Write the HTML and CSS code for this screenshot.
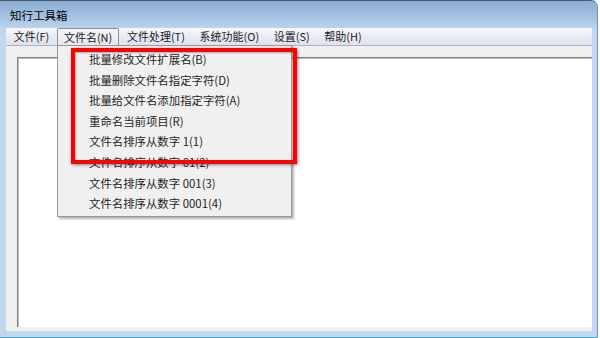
FILE: index.html
```html
<!doctype html>
<html>
<head>
<meta charset="utf-8">
<title>知行工具箱</title>
<link rel="stylesheet" href="styles.css">
</head>
<body>
	<div class="window">
		<div class="titlebar">知行工具箱</div>
		<div class="menubar">
			<span class="menu-item">文件(F)</span>
			<span class="menu-item active">文件名(N)</span>
			<span class="menu-item">文件处理(T)</span>
			<span class="menu-item">系统功能(O)</span>
			<span class="menu-item">设置(S)</span>
			<span class="menu-item">帮助(H)</span>
		</div>
		<div class="client">
			<div class="panel"></div>
		</div>
		<!-- 下拉菜单 -->
		<ul class="dropdown">
			<li>批量修改文件扩展名(B)</li>
			<li>批量删除文件名指定字符(D)</li>
			<li>批量给文件名添加指定字符(A)</li>
			<li>重命名当前项目(R)</li>
			<li>文件名排序从数字 1(1)</li>
			<li>文件名排序从数字 01(2)</li>
			<li>文件名排序从数字 001(3)</li>
			<li>文件名排序从数字 0001(4)</li>
		</ul>
		<div class="mark"></div>
	</div>
</body>
</html>
```
FILE: styles.css
```css
/* 窗口截图 */
html,body{
	margin:0;
	padding:0;
	background:#ffffff;
	font-family:"Noto Sans CJK SC","Liberation Sans",sans-serif;
}
.window{
	width:598px;
	height:338px;
	box-sizing:border-box;
	position:relative;
	display:flex;
	flex-direction:column;
	background:#c2d7ee;
	border-top:1px solid #4c5a6c;
	border-right:1px solid #6e93bb;
	border-bottom:1px solid #3fb2cc;
	border-radius:0 7px 0 0;
	overflow:hidden;
}
.titlebar{
	height:27px;
	padding-left:10px;
	display:flex;
	align-items:center;
	font-size:11.5px;
	color:#000;
	background:linear-gradient(#8badd3,#a9c6e6 70%,#bcd4ed);
}
.menubar{
	height:17px;
	margin:0 5px 0 6px;
	display:flex;
	align-items:center;
	padding-left:1px;
	background:linear-gradient(#f7f8fc,#e9ecf6 50%,#dde2f1);
	border-bottom:1px solid #aeb3c2;
	font-size:11px;
	color:#1a1a1a;
}
.menu-item{
	height:17px;
	line-height:17px;
	padding:0 6.8px;
	margin-right:1px;
	box-sizing:border-box;
}
.menu-item.active{
	height:18px;
	margin-top:1px;
	border:1px solid #8c8e94;
	border-bottom:none;
	border-radius:2px 2px 0 0;
	padding:0 5.8px;
	background:linear-gradient(#f4f5f8,#e3e6ee);
}
.client{
	flex:1;
	margin:0 5px 6px 6px;
	padding:11px 0 4px 11px;
	background:#f0f0f0;
	display:flex;
}
.panel{
	flex:1;
	background:#ffffff;
	border-top:1px solid #7c7c7c;
	border-left:1px solid #7c7c7c;
	box-shadow:inset 1px 1px 0 #c4c4c4;
}
.dropdown{
	list-style:none;
	margin:0;
	padding:3px 0 2px 0;
	position:absolute;
	left:57px;
	top:44px;
	width:235px;
	height:172px;
	box-sizing:border-box;
	background:#f0f0f0;
	border:1px solid #979797;
	box-shadow:2px 2px 2px rgba(0,0,0,0.3);
	font-size:11.4px;
	color:#1e1e1e;
}
.dropdown li{
	height:20.6px;
	line-height:20.6px;
	padding-left:31px;
	white-space:nowrap;
}
.mark{
	position:absolute;
	left:71px;
	top:47px;
	width:226px;
	height:116px;
	box-sizing:border-box;
	border:4px solid #ff0000;
	box-shadow:1px 1px 3px rgba(0,0,0,0.45),inset 1px 1px 2px rgba(0,0,0,0.3);
}
```
